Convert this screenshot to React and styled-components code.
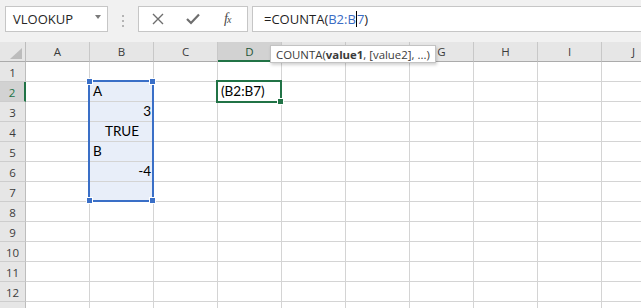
import styled, { createGlobalStyle } from "styled-components"

const GlobalStyle = createGlobalStyle`
  body {
    margin: 0;
    background: #ffffff;
    overflow: hidden;
  }
`

const COLS = ["A", "B", "C", "D", "E", "F", "G", "H", "I", "J"]
const ROWS = [1, 2, 3, 4, 5, 6, 7, 8, 9, 10, 11, 12, 13]

const cells = {
  B2: { text: "A", align: "left" },
  B3: { text: "3", align: "right" },
  B4: { text: "TRUE", align: "center" },
  B5: { text: "B", align: "left" },
  B6: { text: "-4", align: "right" },
  D2: { text: "(B2:B7)", align: "left" },
}

const Page = styled.div`
  width: 641px;
  height: 308px;
  overflow: hidden;
  font-family: "Open Sans", "Noto Sans", sans-serif;
`

const FormulaBar = styled.div`
  display: flex;
  align-items: flex-start;
  height: 42px;
  box-sizing: border-box;
  padding: 6px 0 0 5px;
  background: #f1f1f1;
`

const Box = styled.div`
  display: flex;
  align-items: center;
  height: 26px;
  box-sizing: border-box;
  background: #ffffff;
  border: 1px solid #c6c6c6;
`

const NameBox = styled(Box)`
  width: 103px;
  padding: 0 6px 0 7px;
  justify-content: space-between;
  font-size: 13px;
  color: #262626;
`

const Caret = styled.span`
  width: 0;
  height: 0;
  margin-top: -4px;
  border-left: 3.5px solid transparent;
  border-right: 3.5px solid transparent;
  border-top: 4px solid #7a7a7a;
`

const Grip = styled.div`
  display: flex;
  flex-direction: column;
  gap: 3px;
  width: 30px;
  padding-top: 9px;
  align-items: center;

  span {
    width: 2px;
    height: 2px;
    background: #b4b4b4;
  }
`

const ButtonGroup = styled(Box)`
  width: 110px;
  padding-left: 13px;
  gap: 22px;
`

const IconButton = styled.span`
  display: flex;
  align-items: center;
  justify-content: center;
  margin-right: ${(p) => p.$after || 0}px;
`

const Fx = styled.span`
  font-family: "Liberation Serif", serif;
  font-style: italic;
  font-size: 14px;
  color: #4a4a4a;
  letter-spacing: -1px;

  small {
    font-size: 10px;
  }
`

const FormulaInput = styled(Box)`
  flex: 1;
  margin-left: 4px;
  border-right: none;
  padding-left: 11px;
  font-size: 13px;
  color: #1f1f1f;
`

const Ref = styled.span`
  color: #3a6cc4;
`

const Cursor = styled.span`
  display: inline-block;
  width: 1px;
  height: 16px;
  margin: 0 0 -3px 0;
  background: #000000;
`

const Sheet = styled.div`
  position: relative;
`

const Grid = styled.div`
  display: grid;
  grid-template-columns: 26px repeat(10, 64px);
  grid-auto-rows: 20px;
`

const Corner = styled.div`
  display: flex;
  align-items: flex-end;
  justify-content: flex-end;
  padding: 0 3px 2px 0;
  box-sizing: border-box;
  background: #e6e6e6;
  border-right: 1px solid #bdbdbd;
  border-bottom: 1px solid #ababab;
`

const ColHeader = styled.div`
  display: flex;
  align-items: center;
  justify-content: center;
  box-sizing: border-box;
  font-size: 11.5px;
  color: ${(p) => (p.$active ? "#1e5535" : "#3c3c3c")};
  background: ${(p) => (p.$active ? "#d2d2d2" : "#e6e6e6")};
  border-right: 1px solid #c8c8c8;
  border-bottom: ${(p) => (p.$active ? "2px solid #217346" : "1px solid #ababab")};
`

const RowHeader = styled.div`
  display: flex;
  align-items: center;
  justify-content: center;
  box-sizing: border-box;
  padding-top: 1px;
  font-size: 11.5px;
  color: ${(p) => (p.$active ? "#217346" : "#3c3c3c")};
  background: ${(p) => (p.$active ? "#d2d2d2" : "#e6e6e6")};
  border-right: ${(p) => (p.$active ? "2px solid #217346" : "1px solid #bdbdbd")};
  border-bottom: 1px solid #cdcdcd;
`

const Cell = styled.div`
  display: flex;
  align-items: flex-end;
  justify-content: ${(p) =>
    p.$align === "right" ? "flex-end" : p.$align === "center" ? "center" : "flex-start"};
  box-sizing: border-box;
  padding: 0 2px 1px 3px;
  font-family: "Lato", "Liberation Sans", sans-serif;
  font-size: 13.5px;
  line-height: 17px;
  color: #000000;
  background: ${(p) => (p.$selected ? "#e8eef9" : "#ffffff")};
  border-right: 1px solid #d4d4d4;
  border-bottom: 1px solid #d4d4d4;
`

const Selection = styled.div`
  position: absolute;
  left: 88px;
  top: 38px;
  width: 66px;
  height: 122px;
  box-sizing: border-box;
  border: 2px solid #3a6fc7;
  pointer-events: none;
`

const Handle = styled.span`
  position: absolute;
  width: 5px;
  height: 5px;
  background: ${(p) => p.$color};
  border: 1px solid #ffffff;
  ${(p) => (p.$top ? "top: -4px;" : "bottom: -4px;")}
  ${(p) => (p.$left ? "left: -4px;" : "right: -4px;")}
`

const ActiveCell = styled.div`
  position: absolute;
  left: 216px;
  top: 38px;
  width: 66px;
  height: 23px;
  box-sizing: border-box;
  border: 2px solid #217346;
  pointer-events: none;
`

const Tooltip = styled.div`
  position: absolute;
  left: 270px;
  top: 3px;
  height: 18px;
  padding: 0 5px 0 5px;
  display: flex;
  align-items: center;
  box-sizing: border-box;
  background: #ffffff;
  border: 1px solid #c3c3c3;
  box-shadow: 1px 2px 3px rgba(0, 0, 0, 0.18);
  font-size: 11.4px;
  color: #3b3b3b;
  white-space: nowrap;

  b {
    font-weight: 700;
  }
`

const CloseIcon = () => (
  <svg width="12" height="12" viewBox="0 0 12 12">
    <path d="M1 1 L11 11 M11 1 L1 11" stroke="#6e6e6e" strokeWidth="1.4" fill="none" />
  </svg>
)

const CheckIcon = () => (
  <svg width="14" height="12" viewBox="0 0 14 12">
    <path d="M1 6 L5 10 L13 1.5" stroke="#6e6e6e" strokeWidth="2.2" fill="none" />
  </svg>
)

const CornerMark = () => (
  <svg width="12" height="11" viewBox="0 0 12 11">
    <polygon points="12,0 12,11 0,11" fill="#bcbcbc" />
  </svg>
)

export default function App() {
  return (
    <Page>
      <GlobalStyle />
      <FormulaBar>
        <NameBox>
          VLOOKUP
          <Caret />
        </NameBox>
        <Grip>
          <span />
          <span />
          <span />
        </Grip>
        <ButtonGroup>
          <IconButton><CloseIcon /></IconButton>
          <IconButton $after={2}><CheckIcon /></IconButton>
          <Fx>f<small>x</small></Fx>
        </ButtonGroup>
        <FormulaInput>
          <span>
            =COUNTA(<Ref>B2:B</Ref><Cursor /><Ref>7</Ref>)
          </span>
        </FormulaInput>
      </FormulaBar>
      <Sheet>
        <Grid>
          <Corner><CornerMark /></Corner>
          {COLS.map((c) => (
            <ColHeader key={c} $active={c === "D"}>{c}</ColHeader>
          ))}
          {ROWS.map((r) => [
            <RowHeader key={"h" + r} $active={r === 2}>{r}</RowHeader>,
            ...COLS.map((c) => {
              const cell = cells[c + r]
              return (
                <Cell
                  key={c + r}
                  $align={cell?.align}
                  $selected={c === "B" && r >= 2 && r <= 7}
                >
                  {cell?.text}
                </Cell>
              )
            }),
          ])}
        </Grid>
        <Selection>
          <Handle $color="#3a6fc7" $top $left />
          <Handle $color="#3a6fc7" $top />
          <Handle $color="#3a6fc7" $left />
          <Handle $color="#3a6fc7" />
        </Selection>
        <ActiveCell>
          <Handle $color="#217346" />
        </ActiveCell>
        <Tooltip>
          COUNTA(<b>value1</b>, [value2], ...)
        </Tooltip>
      </Sheet>
    </Page>
  )
}
